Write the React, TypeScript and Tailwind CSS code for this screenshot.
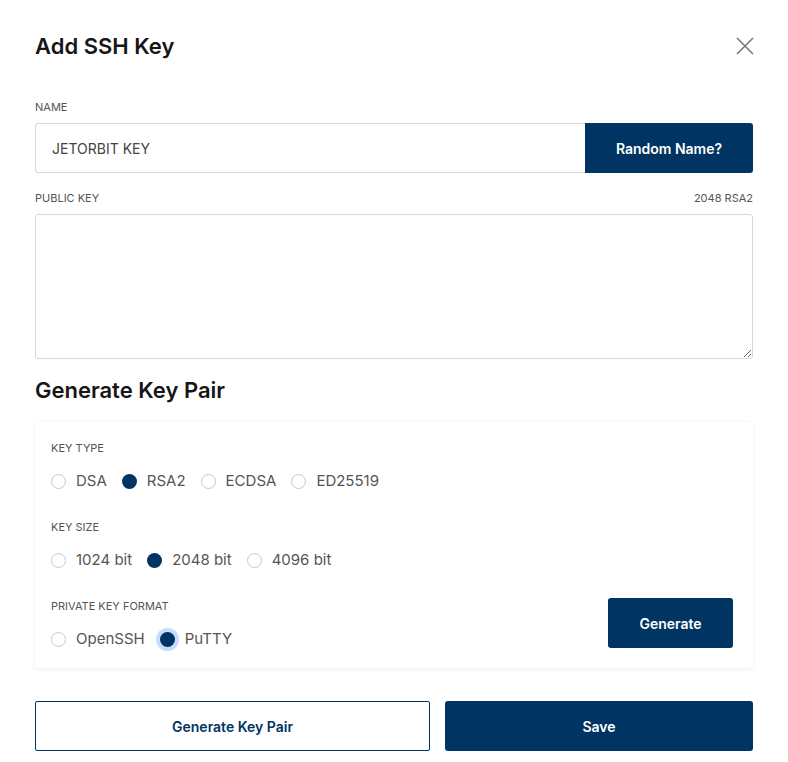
import { useState } from "react";

type RadioGroupProps = {
  name: string;
  options: string[];
  value: string;
  focused?: string;
  onChange: (v: string) => void;
};

function RadioGroup({ options, value, focused, onChange }: RadioGroupProps) {
  return (
    <div className="flex items-center gap-[15px]">
      {options.map((opt) => {
        const checked = opt === value;
        return (
          <button
            key={opt}
            type="button"
            onClick={() => onChange(opt)}
            className="flex items-center gap-[10px] text-[15px] leading-[22px] text-[#555]"
          >
            <span
              className={`block h-[15px] w-[15px] rounded-full ${
                checked ? "bg-[#003462]" : "border border-[#c8c8c8] bg-white"
              } ${checked && focused === opt ? "ring-4 ring-[#c7dcfb]" : ""}`}
            />
            <span>{opt}</span>
          </button>
        );
      })}
    </div>
  );
}

export default function App() {
  const [name, setName] = useState("JETORBIT KEY");
  const [keyType, setKeyType] = useState("RSA2");
  const [keySize, setKeySize] = useState("2048 bit");
  const [format, setFormat] = useState("PuTTY");

  return (
    <div className="min-h-screen bg-white px-[35px] pt-[32px] font-['Inter',sans-serif] text-[#1a1a1a]">
      <header className="flex items-center justify-between">
        <h1 className="text-[22px] font-semibold leading-[28px] text-[#161616]">Add SSH Key</h1>
        <button type="button" className="mr-[-2px] text-[#777]" aria-label="Close">
          <svg width="20" height="20" viewBox="0 0 20 20" fill="none" stroke="currentColor" strokeWidth="1.6">
            <path d="M2 2L18 18M18 2L2 18" />
          </svg>
        </button>
      </header>

      <label className="mt-[40px] block text-[11px] uppercase leading-[14px] text-[#555]">Name</label>
      <div className="mt-[9px] flex h-[50px]">
        <input
          value={name}
          onChange={(e) => setName(e.target.value)}
          className="h-full flex-1 rounded-l-[3px] border border-r-0 border-[#d3d6db] px-[16px] text-[14px] text-[#444] outline-none"
        />
        <button
          type="button"
          className="h-full w-[168px] rounded-r-[3px] bg-[#003462] text-[14px] font-semibold text-white"
        >
          Random Name?
        </button>
      </div>

      <div className="mt-[18px] flex items-center justify-between text-[11px] leading-[14px] text-[#555]">
        <span className="uppercase">Public Key</span>
        <span>2048 RSA2</span>
      </div>
      <textarea className="mt-[9px] block h-[145px] w-full rounded-[3px] border border-[#d3d6db] p-3 text-[14px] outline-none" />

      <h2 className="mt-[16px] text-[22px] font-semibold leading-[30px] text-[#161616]">Generate Key Pair</h2>

      <section className="mt-[17px] rounded-[3px] bg-white px-[16px] pb-[18px] pt-[19px] shadow-[0_1px_4px_rgba(0,0,0,0.08)]">
        <p className="text-[11px] uppercase leading-[14px] text-[#555]">Key Type</p>
        <div className="mt-[15px]">
          <RadioGroup
            name="type"
            options={["DSA", "RSA2", "ECDSA", "ED25519"]}
            value={keyType}
            onChange={setKeyType}
          />
        </div>

        <p className="mt-[28px] text-[11px] uppercase leading-[14px] text-[#555]">Key Size</p>
        <div className="mt-[15px]">
          <RadioGroup
            name="size"
            options={["1024 bit", "2048 bit", "4096 bit"]}
            value={keySize}
            onChange={setKeySize}
          />
        </div>

        <div className="mt-[28px] flex items-start justify-between">
          <div>
            <p className="text-[11px] uppercase leading-[14px] text-[#555]">Private Key Format</p>
            <div className="mt-[15px]">
              <RadioGroup
                name="format"
                options={["OpenSSH", "PuTTY"]}
                value={format}
                focused="PuTTY"
                onChange={setFormat}
              />
            </div>
          </div>
          <button
            type="button"
            className="mr-[4px] mt-[-1px] h-[50px] w-[125px] rounded-[3px] bg-[#003462] text-[14px] font-semibold text-white"
          >
            Generate
          </button>
        </div>
      </section>

      <footer className="mt-[33px] flex gap-[15px]">
        <button
          type="button"
          className="h-[50px] w-[395px] rounded-[2px] border border-[#003462] bg-white text-[14px] font-semibold text-[#003462]"
        >
          Generate Key Pair
        </button>
        <button
          type="button"
          className="h-[50px] flex-1 rounded-[3px] bg-[#003462] text-[14px] font-semibold text-white"
        >
          Save
        </button>
      </footer>
    </div>
  );
}
